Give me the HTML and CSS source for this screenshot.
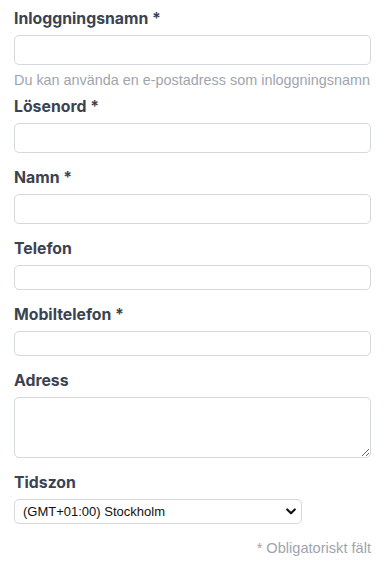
FILE: index.html
```html
<!DOCTYPE html>
<html lang="sv">
<head>
<meta charset="utf-8">
<title>Användare</title>
<link rel="stylesheet" href="styles.css">
</head>
<body>
<form class="form">
  <div class="field field-hinted">
    <label class="label" for="login">Inloggningsnamn *</label>
    <input class="input" id="login" type="text">
    <p class="hint">Du kan använda en e-postadress som inloggningsnamn</p>
  </div>
  <div class="field">
    <label class="label" for="pw">Lösenord *</label>
    <input class="input" id="pw" type="password">
  </div>
  <div class="field">
    <label class="label" for="name">Namn *</label>
    <input class="input" id="name" type="text">
  </div>
  <div class="field">
    <label class="label" for="tel">Telefon</label>
    <input class="input input-sm" id="tel" type="tel">
  </div>
  <div class="field">
    <label class="label" for="mob">Mobiltelefon *</label>
    <input class="input input-sm" id="mob" type="tel">
  </div>
  <div class="field">
    <label class="label" for="addr">Adress</label>
    <textarea class="input textarea" id="addr"></textarea>
  </div>
  <div class="field">
    <label class="label" for="tz">Tidszon</label>
    <div class="select-wrap">
      <select class="select" id="tz">
        <option>(GMT+01:00) Stockholm</option>
      </select>
      <svg class="chevron" viewBox="0 0 10 7" width="10" height="7" aria-hidden="true"><path d="M1.2 1.4 L5 5.2 L8.8 1.4" fill="none" stroke="#111" stroke-width="2.1" stroke-linecap="round" stroke-linejoin="round"/></svg>
    </div>
  </div>
  <p class="note">* Obligatoriskt fält</p>
</form>
</body>
</html>
```
FILE: styles.css
```css
html, body {
  margin: 0;
  background: #ffffff;
}
body {
  padding: 9px 18px 0 14px;
  font-family: Inter, "Liberation Sans", Arial, sans-serif;
  color: #3d4350;
}
.form {
  display: flex;
  flex-direction: column;
}
.field {
  display: flex;
  flex-direction: column;
  margin-bottom: 15px;
}
.field-hinted {
  margin-bottom: 8px;
}
.label {
  font-size: 15.8px;
  line-height: 20px;
  font-weight: 700;
  color: #3b4250;
  margin-bottom: 6px;
}
.input {
  box-sizing: border-box;
  width: 100%;
  height: 30px;
  margin: 0;
  border: 1px solid #d5d8dd;
  border-radius: 5px;
  background: #fff;
  font: 13px "Liberation Sans", Arial, sans-serif;
  padding: 4px 8px;
  outline: none;
}
.input-sm {
  height: 25px;
}
.textarea {
  height: 61px;
  resize: vertical;
  display: block;
}
.hint {
  margin: 6px 0 0;
  font-family: "Liberation Sans", Arial, sans-serif;
  font-size: 14.4px;
  line-height: 18px;
  color: #a0a5ad;
  white-space: nowrap;
}
.select-wrap {
  position: relative;
  width: 288px;
}
.select {
  appearance: none;
  -webkit-appearance: none;
  box-sizing: border-box;
  width: 100%;
  height: 25px;
  margin: 0;
  border: 1px solid #d5d8dd;
  border-radius: 5px;
  background: #fff;
  color: #111;
  font: 13px "Liberation Sans", Arial, sans-serif;
  padding: 0 24px 0 8px;
  outline: none;
}
.chevron {
  position: absolute;
  right: 6px;
  top: 9px;
  pointer-events: none;
}
.note {
  margin: 0;
  text-align: right;
  font-family: "Liberation Sans", Arial, sans-serif;
  font-size: 14.6px;
  line-height: 18px;
  color: #a0a5ad;
}
```
